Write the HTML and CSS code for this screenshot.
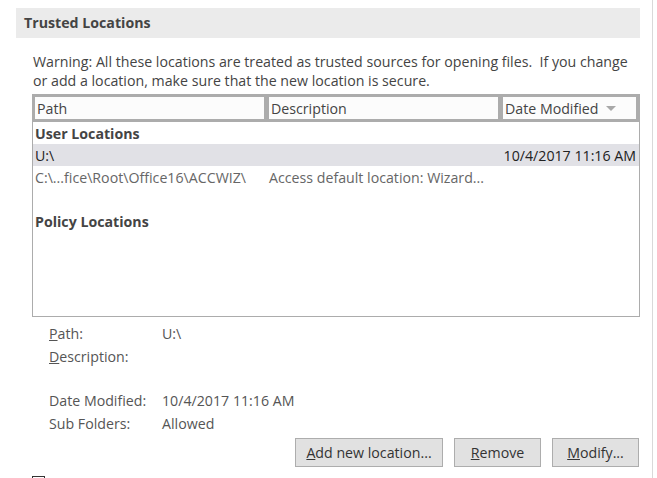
FILE: index.html
```html
<!DOCTYPE html>
<html>
<head>
<meta charset="utf-8">
<link rel="stylesheet" href="styles.css">
</head>
<body>
<div class="panel">
  <div class="section-title">Trusted Locations</div>
  <p class="warning">Warning: All these locations are treated as trusted sources for opening files.&nbsp; If you change or add a location, make sure that the new location is secure.</p>
  <div class="listbox">
    <div class="list-head">
      <div class="head-cell">Path</div>
      <div class="head-cell">Description</div>
      <div class="head-cell">Date Modified <span class="sort-arrow"></span></div>
    </div>
    <div class="row group">User Locations</div>
    <div class="row selected">
      <span>U:\</span><span></span><span class="date">10/4/2017 11:16 AM</span>
    </div>
    <div class="row dim">
      <span>C:\...fice\Root\Office16\ACCWIZ\</span><span>Access default location: Wizard...</span><span></span>
    </div>
    <div class="row"></div>
    <div class="row group">Policy Locations</div>
  </div>
  <div class="details">
    <span class="label"><u>P</u>ath:</span><span class="value">U:\</span>
    <span class="label"><u>D</u>escription:</span><span class="value"></span>
    <span class="label"></span><span class="value"></span>
    <span class="label">Date Modified:</span><span class="value">10/4/2017 11:16 AM</span>
    <span class="label">Sub Folders:</span><span class="value">Allowed</span>
  </div>
  <div class="buttons">
    <button class="btn btn-wide"><u>A</u>dd new location...</button>
    <button class="btn"><u>R</u>emove</button>
    <button class="btn"><u>M</u>odify...</button>
  </div>
  <div class="checkbox-row"><span class="checkbox"></span></div>
</div>
</body>
</html>
```

FILE: styles.css
```css
html, body {
  margin: 0;
  padding: 0;
  background: #ffffff;
}
body {
  font-family: "Open Sans", "Noto Sans", sans-serif;
  font-size: 14.2px;
  color: #444444;
}
.panel {
  width: 653px;
  height: 478px;
  border-right: 1px solid #d9d9d9;
  overflow: hidden;
  padding-top: 8px;
  box-sizing: border-box;
}
.section-title {
  margin-left: 16px;
  width: 624px;
  height: 30px;
  line-height: 30px;
  background: #ebebeb;
  font-weight: bold;
  padding-left: 8px;
  box-sizing: border-box;
  color: #444444;
}
.warning {
  margin: 14px 0 0 33px;
  width: 610px;
  line-height: 19px;
  color: #444444;
}
.listbox {
  margin: 4px 0 0 32px;
  width: 608px;
  height: 223px;
  border: 1px solid #acacac;
  border-top: 0;
  box-sizing: border-box;
}
.list-head {
  display: grid;
  grid-template-columns: 229px 229px 133px;
  column-gap: 5px;
  padding: 3px 4px 3px 3px;
  background: #acacac;
  margin: 0 -1px;
}
.head-cell {
  background: #fcfcfc;
  height: 22px;
  line-height: 23px;
  padding-left: 2px;
  color: #444444;
  white-space: nowrap;
}
.sort-arrow {
  display: inline-block;
  width: 0;
  height: 0;
  border-left: 5px solid transparent;
  border-right: 5px solid transparent;
  border-top: 5px solid #a8a8a8;
  vertical-align: middle;
  margin-left: 4px;
  margin-top: -3px;
}
.row {
  display: grid;
  grid-template-columns: 234px 234px 133px;
  height: 22px;
  line-height: 24px;
  padding-left: 2px;
  white-space: nowrap;
  overflow: hidden;
}
.row.group {
  display: block;
  font-weight: bold;
  color: #444444;
}
.row.selected {
  background: #e1e1e6;
  color: #222222;
}
.row.dim {
  color: #666666;
}
.date {
  text-align: right;
}
.details {
  display: grid;
  grid-template-columns: 113px 200px;
  grid-template-rows: 23px 23px 21px 23px 23px;
  line-height: 23px;
  margin: 5px 0 0 49px;
  color: #555555;
}
.details .value {
  color: #555555;
}
.buttons {
  display: flex;
  justify-content: flex-end;
  gap: 11px;
  margin-top: 3px;
  width: 639px;
}
.btn {
  font-family: "Open Sans", "Noto Sans", sans-serif;
  font-size: 14.2px;
  color: #333333;
  background: #e1e1e1;
  border: 1px solid #adadad;
  height: 29px;
  width: 87px;
  padding: 0;
  margin: 0;
}
.btn-wide {
  width: 148px;
}
.checkbox-row {
  margin: 9px 0 0 32px;
}
.checkbox {
  display: block;
  width: 13px;
  height: 13px;
  border: 1px solid #333333;
  box-sizing: border-box;
}
```
